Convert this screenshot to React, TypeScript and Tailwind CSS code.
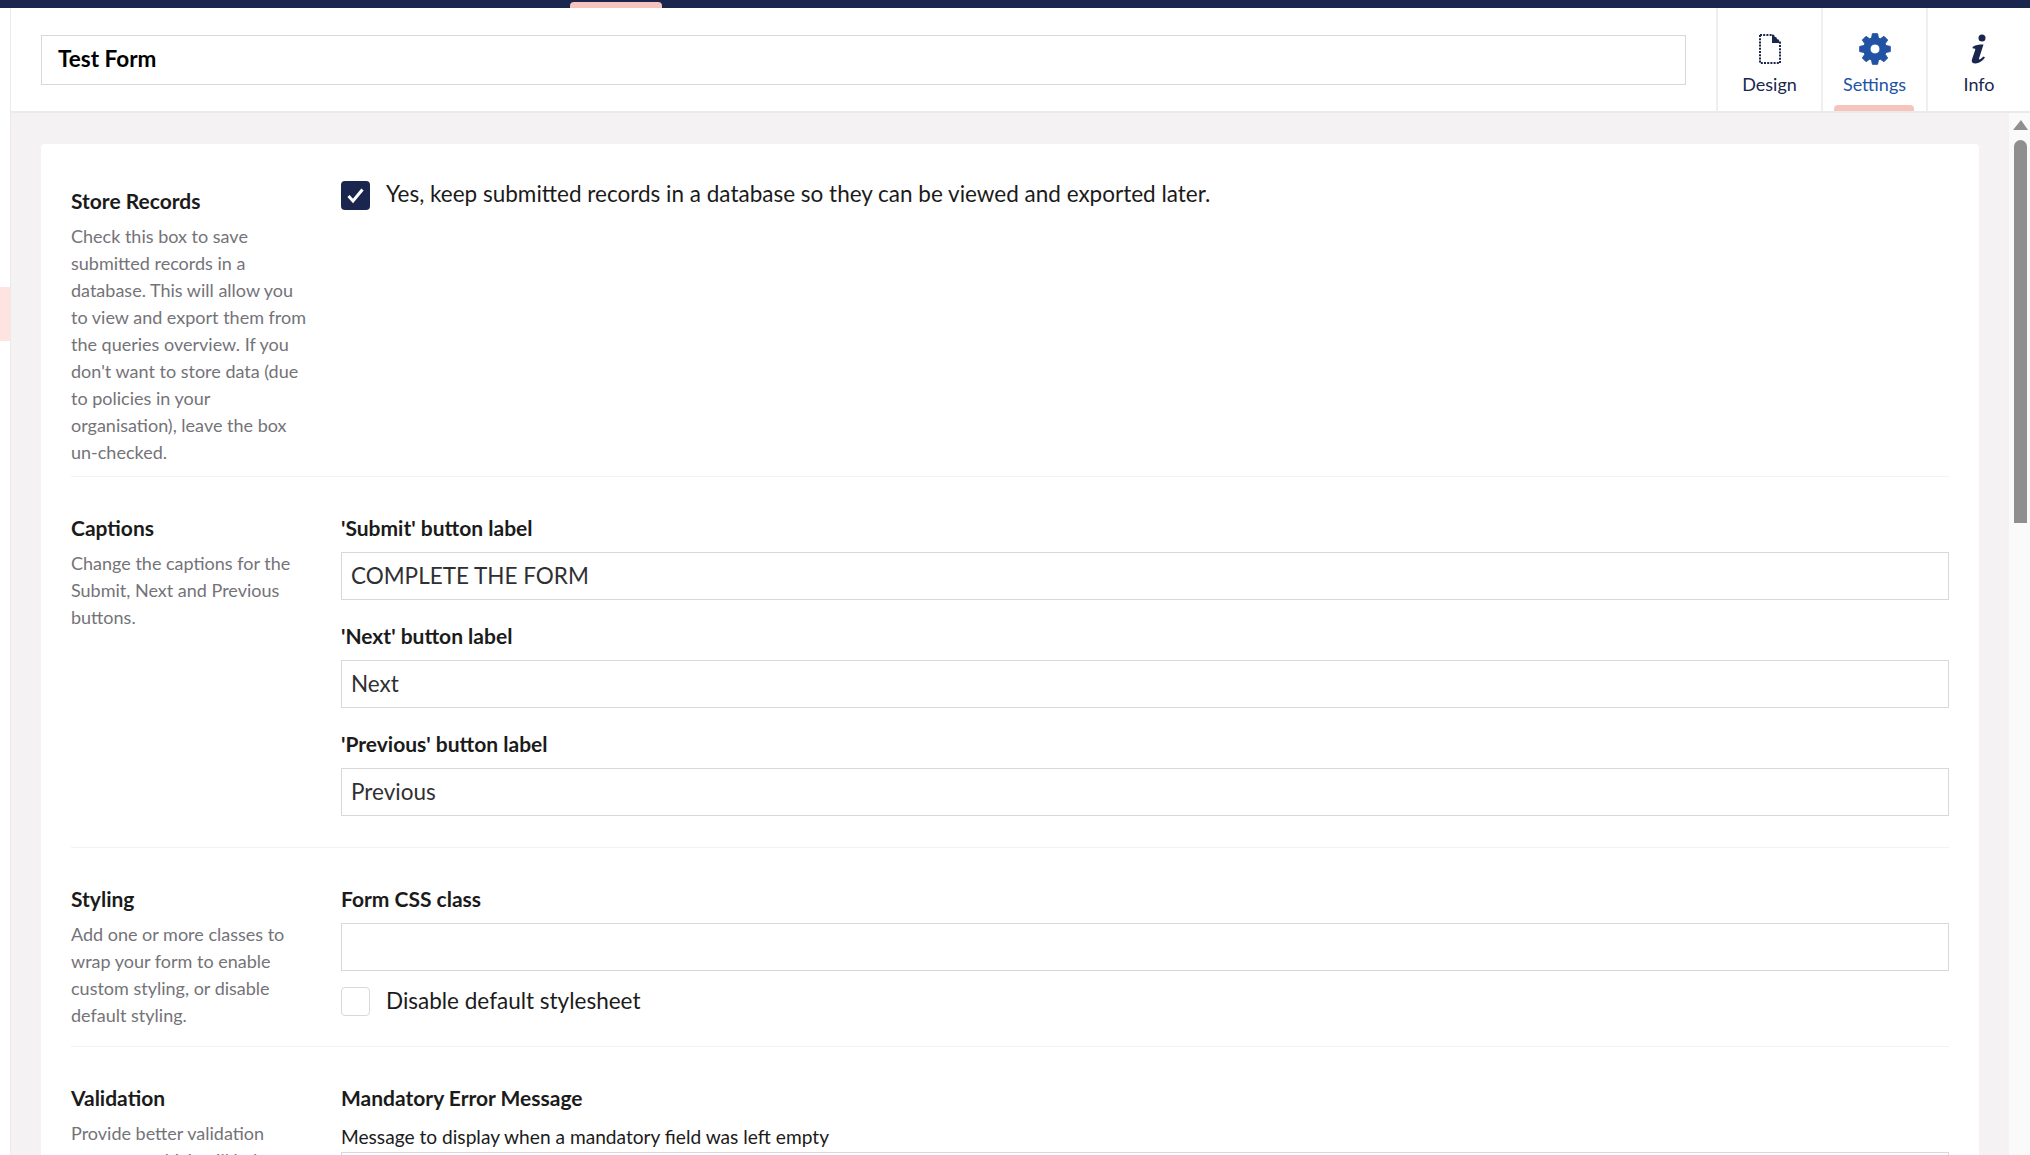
import React from "react";

const Section = ({ title, children, desc, last }: { title: string; children: React.ReactNode; desc: string; last?: boolean }) => (
  <div className={`flex ${last ? "" : "border-b border-[#f3f2f2]"} mb-[30px] pb-[10px]`}>
    <div className="w-[270px] shrink-0 pr-[30px]">
      <div className="text-[21px] leading-[27px] font-bold text-[#1b1b1b] mb-[9px] pt-[7px]">{title}</div>
      <p className="text-[18px] leading-[27px] text-[#747378]">{desc}</p>
    </div>
    <div className="flex-1 min-w-0">{children}</div>
  </div>
);

const Field = ({ label, value }: { label: string; value: string }) => (
  <div className="mb-[15px]">
    <div className="text-[21px] leading-[27px] font-bold text-[#1b1b1b] mb-[11px] pt-[7px]">{label}</div>
    <div className="h-[48px] border border-[#d8d7d9] px-[9px] pb-[1px] flex items-center text-[22.5px] text-[#303033]">{value}</div>
  </div>
);

const DesignIcon = () => (
  <svg width="22" height="30" viewBox="0 0 22 30" fill="none">
    <path d="M1 1H13.5L21 8.5V29H1Z" stroke="#1b264f" strokeWidth="2" strokeDasharray="2 1.2" />
    <path d="M13 0L22 9H13Z" fill="#1b264f" />
  </svg>
);

const InfoIcon = () => (
  <svg width="16" height="30" viewBox="0 0 16 30" fill="#1b264f">
    <circle cx="11" cy="4" r="3.5" />
    <path d="M1.5 13C4 11 8 10.5 12.5 10.5L8 24.5C7.8 25.6 8.6 25.6 9.5 25L12.5 22.5L14 23.5C11.5 27 8 29.5 4.5 29.5C1.5 29.5 0.2 28 0.9 25.5L4.2 16C4.5 14.8 3.5 14.4 1.9 14.6Z" />
  </svg>
);

// 8 tooth cog, matches the filled gear in the tab
const GearIcon = () => {
  const pts: string[] = [];
  for (let i = 0; i < 8; i++) {
    const a = (i * Math.PI) / 4;
    [[-0.3, 11.5], [-0.17, 15.5], [0.17, 15.5], [0.3, 11.5]].forEach(([d, r]) => {
      pts.push(`${(16 + r * Math.sin(a + d)).toFixed(2)} ${(16 - r * Math.cos(a + d)).toFixed(2)}`);
    });
  }
  return (
    <svg width="32" height="32" viewBox="0 0 32 32" fill="#2152a3">
      <path fillRule="evenodd" d={`M${pts.join("L")}Z M21 16A5 5 0 1 0 11 16A5 5 0 1 0 21 16Z`} stroke="#2152a3" strokeWidth="1" strokeLinejoin="round" />
    </svg>
  );
};

const Tab = ({ label, icon, active, narrow }: { label: string; icon: React.ReactNode; active?: boolean; narrow?: boolean }) => (
  <div className={`relative ${narrow ? "w-[104px]" : "w-[105px]"} h-full border-l-2 border-[#f0eff0] flex flex-col items-center pt-[25px] ${active ? "text-[#2152a3]" : "text-[#1b264f]"}`}>
    <div className="h-[32px] flex items-center justify-center">{icon}</div>
    <div className="text-[18px] leading-[24px] mt-[7px]">{label}</div>
    {active && <div className="absolute bottom-0 left-[11px] w-[80px] h-[6px] rounded-t-[4px] bg-[#f6c3bd]" />}
  </div>
);

export default function App() {
  return (
    <div className="h-screen w-full overflow-hidden flex flex-col bg-white text-[#1b1b1b] font-['Lato','Carlito','Open_Sans',sans-serif]">
      <div className="relative h-[8px] bg-[#1b264f] shrink-0">
        <div className="absolute left-[570px] top-[2px] w-[92px] h-[6px] rounded-t-[4px] bg-[#f6c3bd]" />
      </div>
      <div className="flex-1 min-h-0 flex">
        <div className="relative w-[11px] shrink-0 bg-white border-r border-[#ebeaeb]">
          <div className="absolute left-0 top-[279px] w-[10px] h-[54px] bg-[#fee3e0]" />
        </div>
        <div className="flex-1 min-w-0 flex flex-col">
          <div className="h-[105px] shrink-0 flex border-b-2 border-[#ebeaeb]">
            <div className="flex-1 min-w-0 pl-[30px] pr-[30px] pt-[27px]">
              <div className="h-[50px] border border-[#d8d7d9] pl-[16px] pb-[2px] flex items-center text-[22.5px] font-bold text-black">Test Form</div>
            </div>
            <Tab label="Design" icon={<DesignIcon />} />
            <Tab label="Settings" active icon={<GearIcon />} />
            <Tab label="Info" narrow icon={<InfoIcon />} />
          </div>
          <div className="flex-1 min-h-0 flex bg-[#f4f2f3]">
            <div className="flex-1 min-w-0 overflow-hidden pl-[30px] pr-[30px] pt-[31px]">
              <div className="bg-white rounded-[4px] px-[30px] pt-[36px] min-h-full">
                <Section
                  title="Store Records"
                  desc="Check this box to save submitted records in a database. This will allow you to view and export them from the queries overview. If you don't want to store data (due to policies in your organisation), leave the box un-checked."
                >
                  <div className="flex items-center gap-[16px] h-[30px]">
                    <div className="w-[29px] h-[29px] rounded-[4px] bg-[#1b264f] flex items-center justify-center">
                      <svg width="19" height="19" viewBox="0 0 19 19" fill="none">
                        <path d="M2.5 10L7 15L16.5 3.5" stroke="white" strokeWidth="3" />
                      </svg>
                    </div>
                    <span className="text-[22.5px] leading-[30px] -mt-[2px] text-[#1b1b1b]">Yes, keep submitted records in a database so they can be viewed and exported later.</span>
                  </div>
                </Section>
                <Section
                  title="Captions"
                  desc="Change the captions for the Submit, Next and Previous buttons."
                >
                  <Field label="'Submit' button label" value="COMPLETE THE FORM" />
                  <Field label="'Next' button label" value="Next" />
                  <Field label="'Previous' button label" value="Previous" />
                  <div className="h-[6px]" />
                </Section>
                <Section
                  title="Styling"
                  desc="Add one or more classes to wrap your form to enable custom styling, or disable default styling."
                >
                  <Field label="Form CSS class" value="" />
                  <div className="flex items-center gap-[16px] h-[30px]">
                    <div className="w-[29px] h-[29px] rounded-[4px] border border-[#d8d7d9]" />
                    <span className="text-[22.5px] leading-[30px] -mt-[1px] text-[#1b1b1b]">Disable default stylesheet</span>
                  </div>
                  <div className="h-[20px]" />
                </Section>
                <Section
                  last
                  title="Validation"
                  desc="Provide better validation messages which will help your users complete the form."
                >
                  <div className="text-[21px] leading-[27px] font-bold pt-[7px] mb-[12px]">Mandatory Error Message</div>
                  <div className="text-[19.15px] leading-[27px] text-[#1b1b1b] mb-[2px]">Message to display when a mandatory field was left empty</div>
                  <div className="h-[48px] border border-[#d8d7d9]" />
                </Section>
              </div>
            </div>
            <div className="relative w-[21px] shrink-0 bg-[#fbfafa]">
              <div className="absolute left-[4px] top-[7px] w-0 h-0 border-l-[8px] border-r-[7px] border-b-[10px] border-l-transparent border-r-transparent border-b-[#8f8f8f]" />
              <div className="absolute left-[5px] top-[27px] w-[13px] h-[383px] rounded-t-[7px] bg-[#8f8f8f]" />
            </div>
          </div>
        </div>
      </div>
    </div>
  );
}
